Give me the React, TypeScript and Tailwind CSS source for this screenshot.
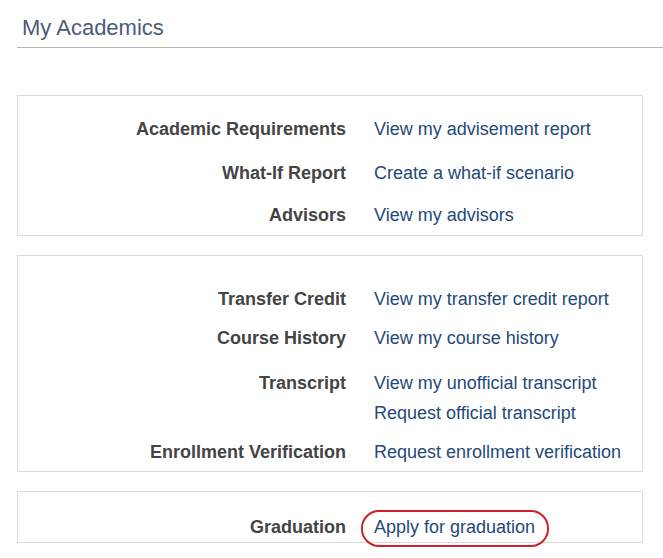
import React from "react";

type Row = { label: string; links: string[]; mt: string; circled?: boolean };

const Box = ({ rows, className }: { rows: Row[]; className: string }) => (
  <div className={`border border-[#dedccf] ${className}`}>
    {rows.map((row) => (
      <div key={row.label} className={`grid grid-cols-[328px_1fr] gap-x-[28px] ${row.mt}`}>
        <div className="text-right font-bold text-[#444444] leading-[24px]">{row.label}</div>
        <div className="flex flex-col gap-[6px]">
          {row.links.map((link) => (
            <span key={link} className="leading-[24px] text-[#23497a]">
              {row.circled ? (
                <span className="relative inline-block">
                  {link}
                  <span className="absolute -left-[13px] -right-[14px] -top-[5px] -bottom-[8px] rounded-[18px] border-2 border-[#d0202e]" />
                </span>
              ) : (
                link
              )}
            </span>
          ))}
        </div>
      </div>
    ))}
  </div>
);

export default function App() {
  return (
    <div className="min-h-screen bg-white pl-[17px] pr-[20px] pt-[16px] text-[18px]" style={{ fontFamily: '"Liberation Sans", Arial, sans-serif' }}>
      {/* header */}
      <div className="-mr-[20px] border-b border-[#b5b5b5] pb-[7px]">
        <h1 className="pl-[5px] text-[22px] leading-[24px] text-[#4c5b78]">My Academics</h1>
      </div>

      <div className="pt-[47px]">
        <Box
          className="pt-[21px] pb-[8px]"
          rows={[
            { label: "Academic Requirements", links: ["View my advisement report"], mt: "" },
            { label: "What-If Report", links: ["Create a what-if scenario"], mt: "mt-[20px]" },
            { label: "Advisors", links: ["View my advisors"], mt: "mt-[18px]" },
          ]}
        />
        <Box
          className="mt-[19px] pt-[31px] pb-[7px]"
          rows={[
            { label: "Transfer Credit", links: ["View my transfer credit report"], mt: "" },
            { label: "Course History", links: ["View my course history"], mt: "mt-[15px]" },
            { label: "Transcript", links: ["View my unofficial transcript", "Request official transcript"], mt: "mt-[21px]" },
            { label: "Enrollment Verification", links: ["Request enrollment verification"], mt: "mt-[15px]" },
          ]}
        />
        <Box
          className="mt-[19px] pt-[23px] pb-[3px]"
          rows={[{ label: "Graduation", links: ["Apply for graduation"], mt: "", circled: true }]}
        />
      </div>
    </div>
  );
}
